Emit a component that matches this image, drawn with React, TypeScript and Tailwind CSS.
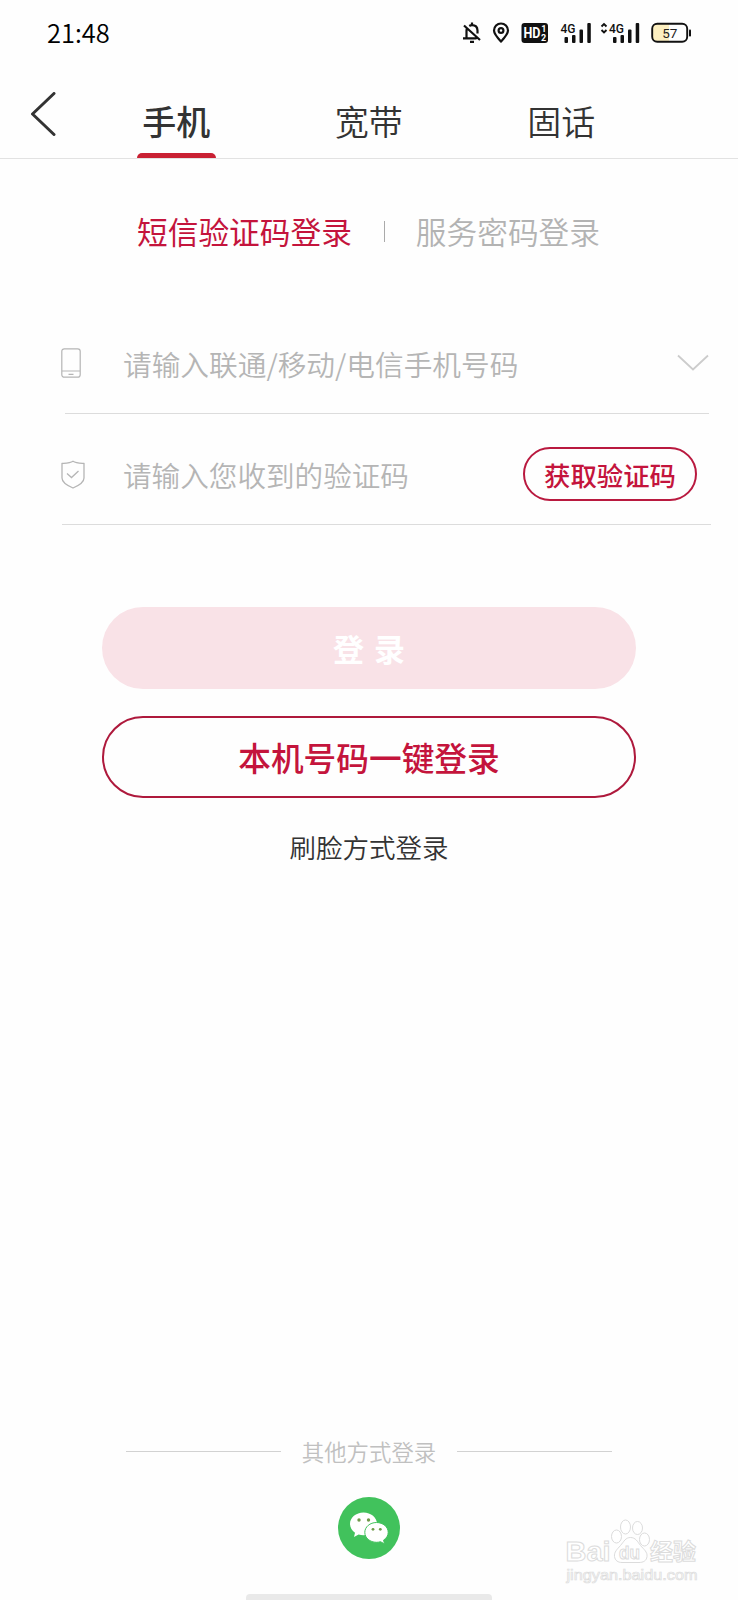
import React, { useState } from 'react';

const TABS = ['手机', '宽带', '固话'];

const StatusIcons = () => (
  <svg width="232" height="24" viewBox="460 21 232 24" fill="none" stroke="#111" strokeWidth="2.200">
    {/* muted bell */}
    <path d="M466.500 37.500V30.500q0-1.500.8-2.700M469.300 26q1.200-.8 2.700-.8 5.300 0 5.500 5.300v3M463 38.300h13.500M472 22.500v2.500M464 25.500l16 14.500M470 41.800h4" />
    {/* location */}
    <path d="M501 41.500c-4-4.300-7-7.500-7-11a7 7 0 0 1 14 0c0 3.500-3 6.700-7 11z" />
    <circle cx="501" cy="30.500" r="2.400" />
    {/* HD */}
    <rect x="521.500" y="23" width="26.500" height="20" rx="3" fill="#111" stroke="none" />
    <g fill="#fff" stroke="none" fontFamily="Roboto, sans-serif" fontWeight="700">
      <text x="523.500" y="38.300" fontSize="14.500" textLength="17" lengthAdjust="spacingAndGlyphs">HD</text>
      <text x="541.200" y="32" fontSize="9">1</text>
      <text x="541" y="40.800" fontSize="9">2</text>
    </g>
    {/* signal 1 */}
    <g fill="#111" stroke="none">
      <text x="560.500" y="32.500" fontSize="13" fontFamily="Roboto, sans-serif" fontWeight="500" textLength="15" lengthAdjust="spacingAndGlyphs">4G</text>
      <rect x="564.500" y="37" width="3.500" height="6" rx="1" />
      <rect x="572" y="35" width="3.500" height="8" rx="1" />
      <rect x="579.500" y="29.500" width="3.500" height="13.500" rx="1" />
      <rect x="587.300" y="23" width="3.500" height="20" rx="1" />
    </g>
    {/* signal 2 */}
    <path d="M601.500 26.500l2.500-2.500 2.500 2.500M601.500 30l2.500 2.500 2.500-2.500" strokeWidth="1.900" />
    <g fill="#111" stroke="none">
      <text x="609" y="32.500" fontSize="13" fontFamily="Roboto, sans-serif" fontWeight="500" textLength="15" lengthAdjust="spacingAndGlyphs">4G</text>
      <rect x="613" y="37" width="3.500" height="6" rx="1" />
      <rect x="620.500" y="35" width="3.500" height="8" rx="1" />
      <rect x="628" y="29.500" width="3.500" height="13.500" rx="1" />
      <rect x="635.700" y="23" width="3.500" height="20" rx="1" />
    </g>
    {/* battery */}
    <path d="M657 24h12v17.500h-12q-4.500 0-4.500-4.500v-8.500q0-4.500 4.500-4.500z" fill="#fcefc0" stroke="none" />
    <rect x="652.200" y="23.800" width="35" height="18" rx="5" strokeWidth="1.900" />
    <rect x="689" y="29.500" width="2" height="7" rx=".8" fill="#111" stroke="none" />
    <text x="669.800" y="37.600" fontSize="13.500" textAnchor="middle" fill="#222" stroke="none" fontFamily="Roboto, sans-serif">57</text>
  </svg>
);

const WechatIcon = () => (
  <svg width="62" height="62" viewBox="0 0 62 62">
    <circle cx="31" cy="31" r="31" fill="#41c25c" />
    <path d="M25.500 15.500c-7.500 0-13.500 5-13.500 11.300 0 3.700 2 6.800 5 8.900l-1 4.200 4.600-2.400c1.500.5 3.200.7 4.900.7 7.500 0 13.500-5.100 13.500-11.400s-6-11.300-13.500-11.300z" fill="#fff" />
    <path d="M38.500 25.500c-6.500 0-11.700 4.400-11.700 9.900s5.200 9.900 11.700 9.900c1.400 0 2.700-.2 4-.6l4 2.200-.9-3.800c2.800-1.800 4.600-4.600 4.600-7.700 0-5.500-5.200-9.900-11.700-9.900z" fill="#fff" stroke="#41c25c" />
    <g fill="#6f9a4a">
      <circle cx="21" cy="23" r="1.700" />
      <circle cx="30.500" cy="23" r="1.700" />
      <circle cx="35" cy="32.300" r="1.400" />
      <circle cx="42.300" cy="32.300" r="1.400" />
    </g>
  </svg>
);

const Watermark = () => (
  <svg className="absolute right-[38px] bottom-[12px]" width="136" height="72" viewBox="564 1516 136 72" fill="#fff" stroke="#dcdcdc" strokeWidth="1">
    <text x="565.500" y="1560.500" fontSize="28" fontWeight="700" fontFamily="'Liberation Sans', sans-serif" textLength="45" lengthAdjust="spacingAndGlyphs">Bai</text>
    <ellipse cx="616.500" cy="1536.500" rx="5" ry="6.500" />
    <ellipse cx="625.500" cy="1527" rx="5" ry="7" />
    <ellipse cx="637.500" cy="1528" rx="5" ry="6.500" />
    <ellipse cx="644.500" cy="1539.500" rx="5" ry="6.500" />
    <path d="M630.500 1537.500c5 0 7 4 10 8 3.500 4 7 6.500 6.500 11-.5 4.500-4 6-8 6h-17c-4 0-7-2-7.500-6-.5-4.500 2.500-7 6-11 3.500-4 5-8 10-8z" />
    <text x="619" y="1558.500" fontSize="18" fontWeight="700" fontFamily="'Liberation Sans', sans-serif" textLength="21" lengthAdjust="spacingAndGlyphs">du</text>
    <text x="650" y="1560" fontSize="23" fontWeight="700" fontFamily="'Noto Sans CJK SC', sans-serif">经验</text>
    <text x="566.500" y="1579.500" fontSize="15" fill="#fefefe" fontFamily="'Liberation Sans', sans-serif" strokeWidth=".7" textLength="131" lengthAdjust="spacingAndGlyphs">jingyan.baidu.com</text>
  </svg>
);

const App: React.FC = () => {
  const [activeTab, setActiveTab] = useState(0);

  return (
    <div lang="zh-CN" className="relative flex flex-col w-[738px] h-[1600px] overflow-hidden bg-[#fefefe] font-['Noto_Sans_CJK_SC',sans-serif] whitespace-nowrap">
      <div className="flex items-center justify-between h-16 pt-px pl-[47px] pr-[46px]">
        <span className="-mt-0.5 text-[25.5px] leading-8 font-[350] text-black">21:48</span>
        <StatusIcons />
      </div>

      <header className="flex h-[95px] border-b border-[#e2e2e2]">
        <button className="w-20 pl-[30px] pt-7 flex items-start" aria-label="返回">
          <svg width="26" height="44" viewBox="0 0 26 44" fill="none" stroke="#333" strokeWidth="3" strokeLinecap="round" strokeLinejoin="round">
            <path d="M24 1.500L2.500 22 24 42.500" />
          </svg>
        </button>
        {TABS.map((tab, i) => (
          <button
            key={tab}
            onClick={() => setActiveTab(i)}
            className="flex flex-col items-center justify-between w-[192.5px] pt-[37px] text-[34px] leading-10 text-[#333]"
          >
            <span className={i === activeTab ? 'font-medium' : 'font-[350]'}>{tab}</span>
            {i === activeTab && <span className="w-[79px] h-[5px] rounded-t-[6px] bg-[#c92033]" />}
          </button>
        ))}
      </header>

      <div className="flex items-center mt-[54px] pl-[137px] text-[30.7px] leading-9">
        <button className="text-[#c4143c]">短信验证码登录</button>
        <span className="w-px h-[21px] ml-8 mr-[31px] bg-[#aaa]" />
        <button className="text-[#b3b3b3] font-[350]">服务密码登录</button>
      </div>

      <div className="mt-16 ml-[61px] mr-[27px] text-[28.6px] text-[#b5b5b5] font-[350]">
        <div className="flex items-center h-[100px] pr-0.5">
          <svg width="20" height="30" viewBox="0 0 20 30" fill="none" stroke="#b5b5b5" strokeWidth="1.200">
            <rect x=".8" y=".8" width="18.400" height="28.400" rx="2.500" />
            <path d="M1 23h18M7.500 26.300h5" />
          </svg>
          <span className="ml-[42px] pt-px text-[28.7px] leading-9">请输入联通/移动/电信手机号码</span>
          <svg className="ml-auto" width="32" height="18" viewBox="0 0 32 18" fill="none" stroke="#ccc" strokeWidth="1.800">
            <path d="M1 1.500l15 14 15-14" />
          </svg>
        </div>
        <div className="h-px ml-1 mr-0.5 bg-[#dcdcdc]" />
        <div className="flex items-center h-[100px] mt-2.5 pr-3.5">
          <svg width="24" height="29" viewBox="0 0 24 29" fill="none" stroke="#b5b5b5" strokeWidth="1.300">
            <path d="M12 1.200c3 2 7 2 11 2.300V18c0 4-4 7-11 10C5 25 1 22 1 18V3.500C5 3.200 9 3.200 12 1.200z" />
            <path d="M6 13.500l4.500 4 7-6.500" />
          </svg>
          <span className="ml-[38px] pt-0.5 leading-9">请输入您收到的验证码</span>
          <button className="ml-auto w-[174px] h-[54px] rounded-full border-2 border-[#b9193f] text-[26.4px] leading-8 pt-px font-medium text-[#c4143c]">
            获取验证码
          </button>
        </div>
        <div className="h-px ml-px bg-[#dcdcdc]" />
      </div>

      <div className="flex flex-col items-center mt-[82px]">
        <button className="w-[534px] h-[82px] rounded-full bg-[#f9e2e7] text-[31px] leading-10 font-bold text-white [word-spacing:3px]">登 录</button>
        <button className="w-[534px] h-[82px] mt-[27px] rounded-full border-2 border-[#ae193c] text-[32.7px] leading-10 font-medium text-[#c4143c]">
          本机号码一键登录
        </button>
        <button className="mt-[31px] text-[26.5px] leading-9 font-[350] text-[#333]">刷脸方式登录</button>
      </div>

      <div className="flex flex-col items-center mt-auto">
        <div className="flex items-center text-[22.4px] leading-8 font-[350] text-[#c0c0c0]">
          <span className="w-[155px] h-px mr-[21px] bg-[#d2d2d2]" />
          其他方式登录
          <span className="w-[155px] h-px ml-[21px] bg-[#d2d2d2]" />
        </div>
        <button className="mt-[30px]" aria-label="微信登录">
          <WechatIcon />
        </button>
        <div className="w-[246px] h-1.5 mt-[35px] rounded-t-[4px] bg-[#e9e9e9]" />
      </div>

      <Watermark />
    </div>
  );
};

export default App;
